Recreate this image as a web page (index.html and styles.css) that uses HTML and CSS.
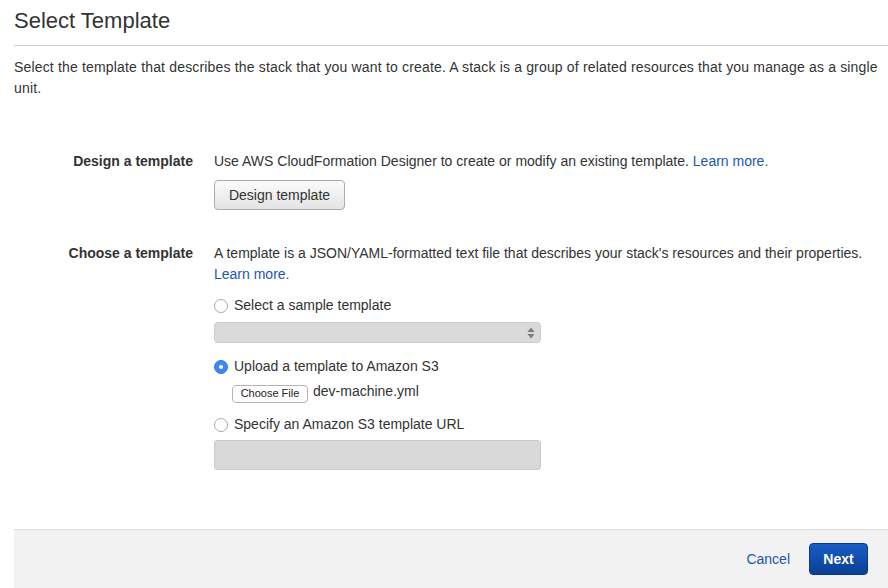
FILE: index.html
```html
<!DOCTYPE html>
<html>
<head>
<meta charset="utf-8">
<title>Select Template</title>
<link rel="stylesheet" href="styles.css">
</head>
<body>
<div class="page">
  <h1 class="title">Select Template</h1>
  <p class="intro">Select the template that describes the stack that you want to create. A stack is a group of related resources that you manage as a single unit.</p>

  <div class="form">
    <div class="row row-design">
      <div class="label">Design a template</div>
      <div class="content">
        <div class="text">Use AWS CloudFormation Designer to create or modify an existing template. <a class="link" href="#">Learn more.</a></div>
        <button class="btn">Design template</button>
      </div>
    </div>

    <div class="row row-choose">
      <div class="label">Choose a template</div>
      <div class="content">
        <div class="text">A template is a JSON/YAML-formatted text file that describes your stack's resources and their properties. <a class="link" href="#">Learn more.</a></div>

        <label class="option opt-first"><span class="radio"></span>Select a sample template</label>
        <div class="select">
          <svg class="arrows" width="8" height="12" viewBox="0 0 8 12"><path d="M4 0.5 L7.5 5 L0.5 5 Z" fill="#7a7a7a"/><path d="M4 11.5 L7.5 7 L0.5 7 Z" fill="#7a7a7a"/></svg>
        </div>

        <label class="option opt-upload"><span class="radio checked"></span>Upload a template to Amazon S3</label>
        <div class="file-row"><span class="file-btn">Choose File</span><span class="file-name">dev-machine.yml</span></div>

        <label class="option opt-url"><span class="radio"></span>Specify an Amazon S3 template URL</label>
        <div class="url-input"></div>
      </div>
    </div>
  </div>

  <div class="footer">
    <a class="cancel" href="#">Cancel</a>
    <button class="next">Next</button>
  </div>
</div>
</body>
</html>
```

FILE: styles.css
```css
html, body {
  margin: 0;
  padding: 0;
  background: #ffffff;
}
body {
  font-family: "Liberation Sans", Arial, Helvetica, sans-serif;
  font-size: 14px;
  color: #333333;
}
.page {
  padding-left: 14px;
  width: 874px;
}
.title {
  margin: 0;
  padding: 7px 0 10px 0;
  font-size: 22px;
  line-height: 28px;
  font-weight: normal;
  color: #333333;
  border-bottom: 1px solid #cccccc;
}
.intro {
  margin: 11px 0 0 0;
  line-height: 21px;
  letter-spacing: 0.17px;
  max-width: 866px;
}
.form {
  padding-top: 52px;
}
.row {
  display: grid;
  grid-template-columns: 179px 1fr;
  column-gap: 21px;
}
.row-choose {
  margin-top: 33px;
}
.label {
  text-align: right;
  font-weight: bold;
  line-height: 21px;
  color: #333333;
}
.content {
  line-height: 21px;
  min-width: 0;
}
.link {
  color: #1d55b4;
  text-decoration: none;
}
.btn {
  display: block;
  margin-top: 8px;
  width: 131px;
  height: 30px;
  padding: 0;
  font-family: inherit;
  font-size: 14px;
  color: #333333;
  background: linear-gradient(#fbfbfb, #e4e4e4);
  border: 1px solid #ababab;
  border-radius: 4px;
}
.option {
  display: flex;
  align-items: center;
  height: 21px;
  line-height: 21px;
}
.opt-first {
  margin-top: 10px;
}
.opt-upload {
  margin-top: 13px;
}
.opt-url {
  margin-top: 11px;
}
.radio {
  box-sizing: border-box;
  width: 14px;
  height: 14px;
  border: 1px solid #a9a9a9;
  border-radius: 50%;
  background: #ffffff;
  margin-right: 6px;
  display: flex;
  align-items: center;
  justify-content: center;
}
.radio.checked {
  background: #3b88f5;
  border-color: #2f7ae8;
}
.radio.checked::after {
  content: "";
  width: 4px;
  height: 4px;
  border-radius: 50%;
  background: #ffffff;
}
.select {
  box-sizing: border-box;
  margin-top: 6px;
  width: 327px;
  height: 21px;
  background: #dadada;
  border: 1px solid #cdcdcd;
  border-radius: 4px;
  display: flex;
  align-items: center;
  justify-content: flex-end;
  padding-right: 5px;
}
.arrows {
  display: block;
}
.file-row {
  margin-top: 7px;
  margin-left: 18px;
  display: flex;
  align-items: center;
  height: 19px;
}
.file-btn {
  box-sizing: border-box;
  display: inline-flex;
  align-items: center;
  justify-content: center;
  width: 76px;
  height: 18px;
  font-size: 11px;
  color: #222222;
  background: #ffffff;
  border: 1px solid #b4b4b4;
  border-radius: 4px;
  margin-right: 5px;
}
.file-name {
  font-size: 14px;
  line-height: 19px;
  position: relative;
  top: -2px;
}
.url-input {
  box-sizing: border-box;
  margin-top: 5px;
  width: 327px;
  height: 30px;
  background: #d9d9d9;
  border: 1px solid #cbcbcb;
  border-radius: 3px;
}
.footer {
  box-sizing: border-box;
  margin-top: 59px;
  height: 59px;
  background: #f2f2f2;
  border-top: 1px solid #dddddd;
  display: flex;
  justify-content: flex-end;
  align-items: center;
  padding-right: 20px;
  gap: 19px;
}
.cancel {
  color: #1d55b4;
  text-decoration: none;
  font-size: 14px;
}
.next {
  width: 59px;
  height: 32px;
  padding: 0;
  font-family: inherit;
  font-size: 14px;
  font-weight: bold;
  color: #ffffff;
  background: linear-gradient(#1a5cc4, #0a3f96);
  border: 1px solid #0a3a8a;
  border-radius: 4px;
}
```
